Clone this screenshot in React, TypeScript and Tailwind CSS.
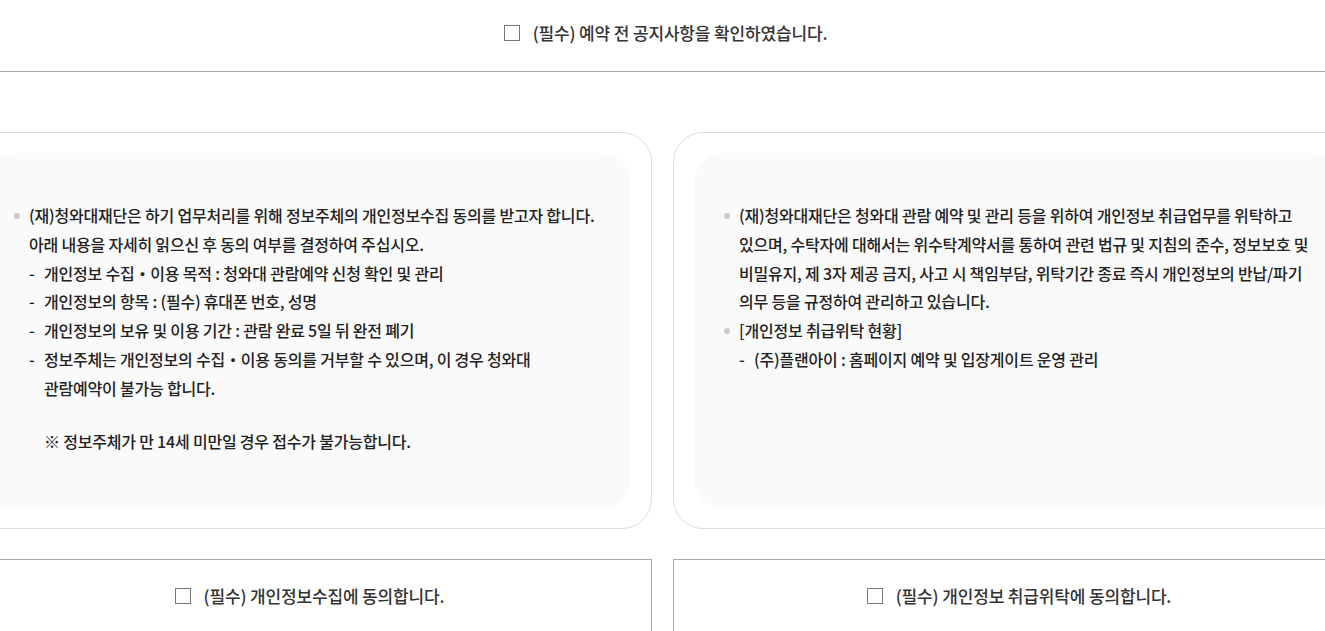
import React from 'react';

const font = { fontFamily: '"Noto Sans CJK KR", "Noto Sans", sans-serif' };

const Check = ({ label }: { label: string }) => (
  <label className="flex items-center gap-[13px] cursor-pointer">
    <span className="w-[16px] h-[16px] border border-[#777] bg-white shrink-0" />
    <span className="text-[17px] font-medium text-[#333] tracking-[-0.15px]">{label}</span>
  </label>
);

const Bullet = ({ children }: { children: React.ReactNode }) => (
  <li className="relative">
    <span className="absolute left-[-15px] top-[12px] w-[6px] h-[6px] rounded-full bg-[#ccc]" />
    {children}
  </li>
);

const Dash = ({ children }: { children: React.ReactNode }) => (
  <li className="relative pl-[15px]">
    <span className="absolute left-0 top-0">-</span>
    {children}
  </li>
);

const Card = ({ children }: { children: React.ReactNode }) => (
  <div className="rounded-[30px] border border-[#ddd] p-[20px]">
    <div className="h-[355px] rounded-[30px] bg-[#fafafa] pt-[48px] pl-[45px] pr-[20px] text-[16px] font-medium leading-[28.8px] text-[#222] tracking-[-0.2px] whitespace-nowrap">
      {children}
    </div>
  </div>
);

export default function App() {
  return (
    <div className="w-full min-h-screen bg-white overflow-hidden" style={font}>
      <div className="h-[72px] border-b border-[#aaa] flex items-center justify-center pb-[5px] pl-[6px]">
        <Check label="(필수) 예약 전 공지사항을 확인하였습니다." />
      </div>

      <div className="flex justify-center mt-[60px]">
        <div className="w-[1399px] shrink-0 flex gap-[21px]">
          <div className="w-[689px] shrink-0">
            <Card>
              <ul>
                <Bullet>
                  (재)청와대재단은 하기 업무처리를 위해 정보주체의 개인정보수집 동의를 받고자 합니다.
                  <br />
                  아래 내용을 자세히 읽으신 후 동의 여부를 결정하여 주십시오.
                  <ul>
                    <Dash>개인정보 수집・이용 목적 : 청와대 관람예약 신청 확인 및 관리</Dash>
                    <Dash>개인정보의 항목 : (필수) 휴대폰 번호, 성명</Dash>
                    <Dash>개인정보의 보유 및 이용 기간 : 관람 완료 5일 뒤 완전 폐기</Dash>
                    <Dash>
                      정보주체는 개인정보의 수집・이용 동의를 거부할 수 있으며, 이 경우 청와대
                      <br />
                      관람예약이 불가능 합니다.
                    </Dash>
                  </ul>
                  <p className="pl-[15px] mt-[24px]">※ 정보주체가 만 14세 미만일 경우 접수가 불가능합니다.</p>
                </Bullet>
              </ul>
            </Card>
            <div className="mt-[30px] h-[73px] border border-[#aaa] flex items-center justify-center pl-[4px]">
              <Check label="(필수) 개인정보수집에 동의합니다." />
            </div>
          </div>

          <div className="w-[689px] shrink-0">
            <Card>
              <ul>
                <Bullet>
                  (재)청와대재단은 청와대 관람 예약 및 관리 등을 위하여 개인정보 취급업무를 위탁하고
                  <br />
                  있으며, 수탁자에 대해서는 위수탁계약서를 통하여 관련 법규 및 지침의 준수, 정보보호 및
                  <br />
                  비밀유지, 제 3자 제공 금지, 사고 시 책임부담, 위탁기간 종료 즉시 개인정보의 반납/파기
                  <br />
                  의무 등을 규정하여 관리하고 있습니다.
                </Bullet>
                <Bullet>
                  [개인정보 취급위탁 현황]
                  <ul>
                    <Dash>(주)플랜아이 : 홈페이지 예약 및 입장게이트 운영 관리</Dash>
                  </ul>
                </Bullet>
              </ul>
            </Card>
            <div className="mt-[30px] h-[73px] border border-[#aaa] flex items-center justify-center pl-[3px]">
              <Check label="(필수) 개인정보 취급위탁에 동의합니다." />
            </div>
          </div>
        </div>
      </div>
    </div>
  );
}
